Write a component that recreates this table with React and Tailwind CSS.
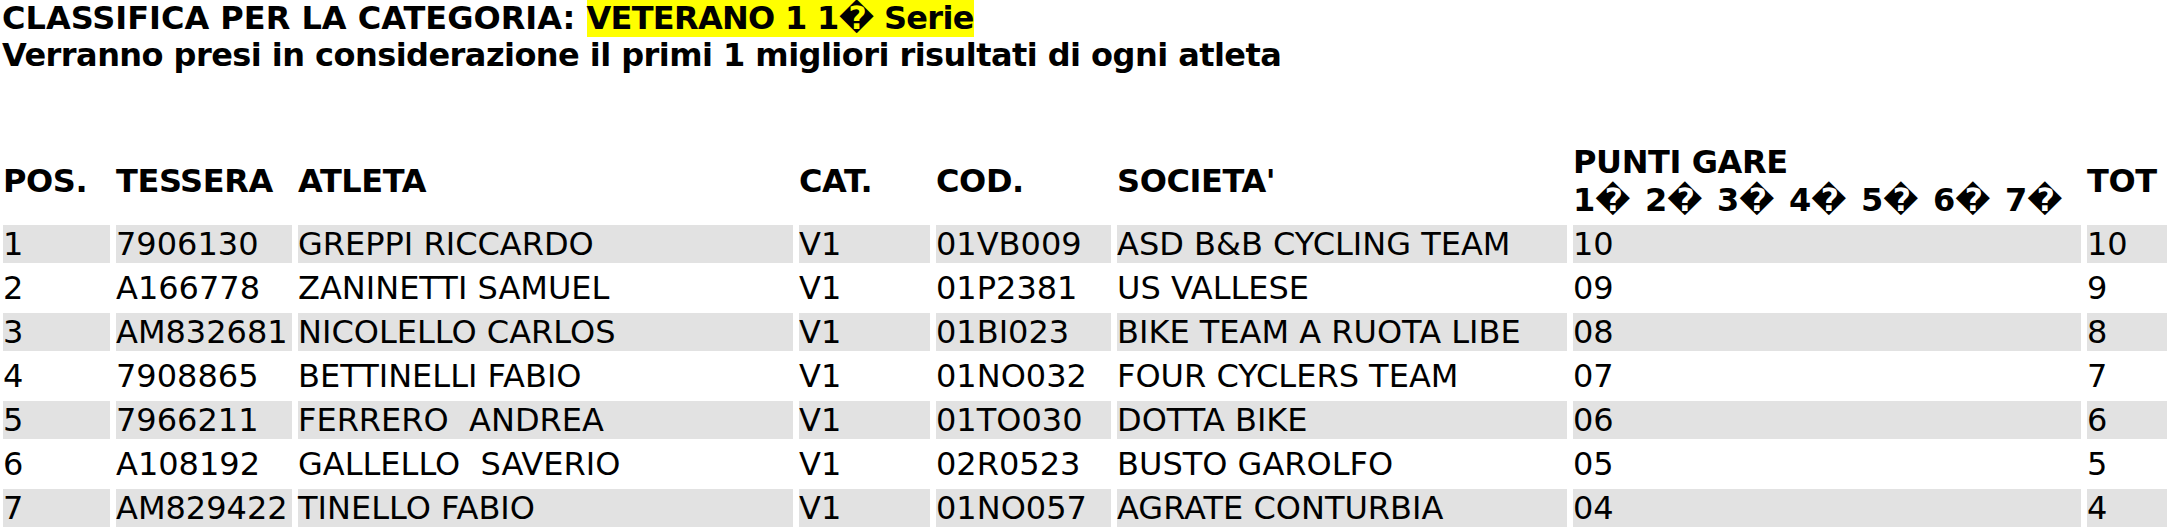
import React from 'react';

const rows = [
  ['1', '7906130', 'GREPPI RICCARDO', 'V1', '01VB009', 'ASD B&B CYCLING TEAM', '10', '10'],
  ['2', 'A166778', 'ZANINETTI SAMUEL', 'V1', '01P2381', 'US VALLESE', '09', '9'],
  ['3', 'AM832681', 'NICOLELLO CARLOS', 'V1', '01BI023', 'BIKE TEAM A RUOTA LIBE', '08', '8'],
  ['4', '7908865', 'BETTINELLI FABIO', 'V1', '01NO032', 'FOUR CYCLERS TEAM', '07', '7'],
  ['5', '7966211', 'FERRERO  ANDREA', 'V1', '01TO030', 'DOTTA BIKE', '06', '6'],
  ['6', 'A108192', 'GALLELLO  SAVERIO', 'V1', '02R0523', 'BUSTO GAROLFO', '05', '5'],
  ['7', 'AM829422', 'TINELLO FABIO', 'V1', '01NO057', 'AGRATE CONTURBIA', '04', '4'],
];

const gare = ['1', '2', '3', '4', '5', '6', '7'];

const App = () => {
  return (
    <div className="w-[2172px] h-[529px] overflow-hidden bg-white text-black font-['DejaVu_Sans',sans-serif] text-[32px]">
      {/* intestazione */}
      <div className="pl-[2px] font-bold leading-[37px]">
        <div>
          CLASSIFICA PER LA CATEGORIA: <span className="bg-[#ffff00] tracking-[-0.7px]">VETERANO 1 1{'\uFFFD'} Serie</span>
        </div>
        <div className="tracking-[-0.55px]">Verranno presi in considerazione il primi 1 migliori risultati di ogni atleta</div>
      </div>

      <table className="mt-[63px] -ml-[3px] w-[2176px] table-fixed border-separate border-spacing-[6px] leading-[38px] whitespace-pre">
        <thead>
          <tr className="text-left align-middle font-bold tracking-[-0.4px]">
            <th className="w-[107px] p-0">POS.</th>
            <th className="w-[176px] p-0">TESSERA</th>
            <th className="w-[495px] p-0">ATLETA</th>
            <th className="w-[131px] p-0">CAT.</th>
            <th className="w-[175px] p-0">COD.</th>
            <th className="w-[450px] p-0">SOCIETA'</th>
            <th className="w-[508px] p-0">
              <div>PUNTI GARE</div>
              <div className="flex">
                {gare.map((g) => (
                  <span key={g} className="w-[72px]">{g}{'\uFFFD'}</span>
                ))}
              </div>
            </th>
            <th className="w-[80px] p-0">TOT</th>
          </tr>
        </thead>
        <tbody>
          {rows.map((r, i) => (
            <tr key={r[0]}>
              {r.map((c, j) => (
                <td key={j} className={`p-0 h-[38px] ${i % 2 === 0 ? 'bg-[#e2e2e2]' : 'bg-white'}`}>{c}</td>
              ))}
            </tr>
          ))}
        </tbody>
      </table>
    </div>
  );
};

export default App;
